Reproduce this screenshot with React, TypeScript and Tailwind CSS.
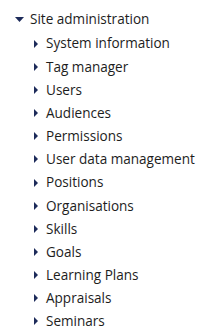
const items = [
  'System information',
  'Tag manager',
  'Users',
  'Audiences',
  'Permissions',
  'User data management',
  'Positions',
  'Organisations',
  'Skills',
  'Goals',
  'Learning Plans',
  'Appraisals',
  'Seminars',
];

function CaretDown() {
  return (
    <svg width="9" height="5" viewBox="0 0 9 5" className="shrink-0">
      <path d="M0 0h9L4.5 5z" fill="#1d2b5a" />
    </svg>
  );
}

function CaretRight() {
  return (
    <svg width="4" height="8" viewBox="0 0 4 8" className="shrink-0">
      <path d="M0 0l4 4-4 4z" fill="#1d2b5a" />
    </svg>
  );
}

export default function App() {
  return (
    <div className="w-[211px] h-[330px] bg-white overflow-hidden pt-[8px] font-['Open_Sans',sans-serif] text-[13.55px] text-[#1d1d1d]">
      <div className="flex items-center h-[23px] pl-[15px] gap-[6px]">
        <CaretDown />
        <span>Site administration</span>
      </div>
      <ul className="mt-[1px]">
        {items.map((item) => (
          <li key={item} className="flex items-center h-[23.17px] pl-[34px] gap-[8px]">
            <CaretRight />
            <span className="whitespace-nowrap">{item}</span>
          </li>
        ))}
      </ul>
    </div>
  );
}
